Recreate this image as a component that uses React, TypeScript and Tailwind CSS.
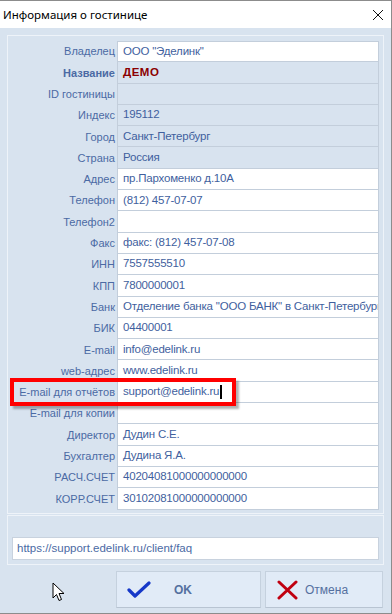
import React from "react";

const rows: { label: string; value: string; ro?: boolean; bold?: boolean }[] = [
  { label: "Владелец", value: 'ООО "Эделинк"' },
  { label: "Название", value: "ДЕМО", ro: true, bold: true },
  { label: "ID гостиницы", value: "", ro: true },
  { label: "Индекс", value: "195112", ro: true },
  { label: "Город", value: "Санкт-Петербург", ro: true },
  { label: "Страна", value: "Россия", ro: true },
  { label: "Адрес", value: "пр.Пархоменко д.10А" },
  { label: "Телефон", value: "(812) 457-07-07" },
  { label: "Телефон2", value: "" },
  { label: "Факс", value: "факс: (812) 457-07-08" },
  { label: "ИНН", value: "7557555510" },
  { label: "КПП", value: "7800000001" },
  { label: "Банк", value: 'Отделение банка "ООО БАНК" в Санкт-Петербург' },
  { label: "БИК", value: "04400001" },
  { label: "E-mail", value: "info@edelink.ru" },
  { label: "web-адрес", value: "www.edelink.ru" },
  { label: "E-mail для отчётов", value: "support@edelink.ru" },
  { label: "E-mail для копии", value: "" },
  { label: "Директор", value: "Дудин С.Е." },
  { label: "Бухгалтер", value: "Дудина Я.А." },
  { label: "РАСЧ.СЧЕТ", value: "40204081000000000000" },
  { label: "КОРР.СЧЕТ", value: "30102081000000000000" },
];

export default function App() {
  return (
    <div
      className="relative w-[392px] h-[614px] bg-[#d8e3ef] border-t border-r border-b border-[#8c8c8c] overflow-hidden"
      style={{ fontFamily: '"Liberation Sans", Arial, sans-serif' }}
    >
      {/* Title bar */}
      <div className="h-[27px] bg-white flex items-center justify-between pl-[3px] pr-[7px]">
        <span
          className="text-[11.5px] text-black"
          style={{ fontFamily: '"Noto Sans", "Open Sans", sans-serif' }}
        >
          Информация о гостинице
        </span>
        <svg width="12" height="12" viewBox="0 0 12 12">
          <path d="M1 1 L11 11 M11 1 L1 11" stroke="#111" strokeWidth="1" />
        </svg>
      </div>

      <div className="pt-[7px] pl-[7px] pr-[7px] flex flex-col">
        {/* Main panel */}
        <div className="h-[479px] border border-[#eef3f9] flex flex-col pt-[5px]">
          {rows.map((r, i) => (
            <div key={i} className="flex h-[21.3px]">
              <div
                className={`w-[109px] shrink-0 flex items-center justify-end pr-[2px] text-[11px] text-[#4b6aa4] whitespace-nowrap ${
                  r.bold ? "font-bold" : ""
                }`}
              >
                {r.label}
              </div>
              <div
                className={`w-[262px] shrink-0 flex items-center pl-[5px] border-l border-r border-b border-[#c3cedb] overflow-hidden whitespace-nowrap text-[11.5px] tracking-[-0.2px] ${
                  i === 0 ? "border-t" : ""
                } ${r.ro ? "bg-[#d8e3ef]" : "bg-white"} ${
                  r.bold ? "font-bold text-[#8b0000] tracking-[0.5px]" : "text-[#3f5f9e]"
                }`}
              >
                {r.value}
                {i === 16 && <span className="inline-block w-[2px] h-[14px] bg-black ml-[1px]" />}
              </div>
            </div>
          ))}
        </div>

        {/* URL panel */}
        <div className="mt-[1px] h-[50px] border border-[#eef3f9] flex items-end px-[4px] pb-[4px]">
          <div className="w-full h-[23px] bg-white border border-[#c8d2de] flex items-center pl-[4px] text-[11.5px] text-[#4b6aa4]">
            https://support.edelink.ru/client/faq
          </div>
        </div>

        {/* Buttons */}
        <div className="mt-[6px] flex h-[37px]">
          <div className="w-[109px] shrink-0" />
          <div className="w-[145px] shrink-0 bg-[#e1ebf7] border border-[#c5d1de] border-b-[#b8c4d2] flex items-center pl-[10px]">
            <svg width="24" height="18" viewBox="0 0 24 18">
              <path d="M2 9 L8 15 L22 2" fill="none" stroke="#1638c8" strokeWidth="3.2" strokeLinecap="round" strokeLinejoin="round" />
            </svg>
            <span className="ml-[23px] text-[12px] font-bold text-[#55709f]">OK</span>
          </div>
          <div className="w-[4px] shrink-0" />
          <div className="w-[118px] shrink-0 bg-[#e1ebf7] border border-[#c5d1de] border-b-[#b8c4d2] flex items-center pl-[11px]">
            <svg width="21" height="20" viewBox="0 0 21 20">
              <path d="M2 2 L19 18 M19 2 L2 18" fill="none" stroke="#c00010" strokeWidth="3" strokeLinecap="round" />
            </svg>
            <span className="ml-[7px] text-[12px] text-[#55709f]">Отмена</span>
          </div>
        </div>
      </div>

      {/* Red highlight box */}
      <div className="absolute left-[10px] top-[377px] w-[226px] h-[28px] border-[4px] border-[#ff0000] shadow-[3px_3px_2px_rgba(0,0,0,0.3)]" />

      {/* Mouse cursor */}
      <svg className="absolute left-[52px] top-[581px]" width="14" height="21" viewBox="0 0 14 21">
        <path d="M1 1 L1 16 L4.5 12.5 L7 18.5 L9.5 17.5 L7 11.5 L12 11.5 Z" fill="white" stroke="black" strokeWidth="1" strokeLinejoin="miter" />
      </svg>
    </div>
  );
}
